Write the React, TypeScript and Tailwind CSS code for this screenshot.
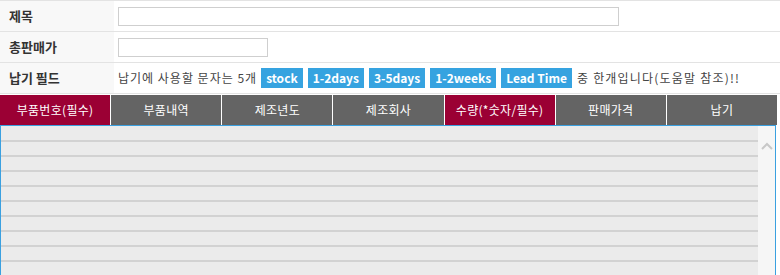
const font = { fontFamily: '"Noto Sans CJK KR", "Noto Sans", sans-serif' };

const codes = ["stock", "1-2days", "3-5days", "1-2weeks", "Lead Time"];

const columns = [
  { label: "부품번호(필수)", req: true },
  { label: "부품내역", req: false },
  { label: "제조년도", req: false },
  { label: "제조회사", req: false },
  { label: "수량(*숫자/필수)", req: true },
  { label: "판매가격", req: false },
  { label: "납기", req: false },
];

function Row({ label, children }: { label: string; children: React.ReactNode }) {
  return (
    <div className="flex h-[31px] border-b border-[#e3e3e3]">
      <div className="w-[114px] shrink-0 bg-[#f8f8f8] pl-[9px] flex items-center text-[13px] font-bold text-[#333]">
        {label}
      </div>
      <div className="flex-1 flex items-center pl-[4px]">{children}</div>
    </div>
  );
}

export default function App() {
  return (
    <div className="w-[780px] h-[275px] overflow-hidden bg-white" style={font}>
      <div className="border-t border-[#e3e3e3]">
        <Row label="제목">
          <div className="w-[501px] h-[19px] border border-[#cfcfcf] bg-white" />
        </Row>
        <Row label="총판매가">
          <div className="w-[150px] h-[19px] border border-[#cfcfcf] bg-white" />
        </Row>
        <Row label="납기 필드">
          <div className="flex items-center text-[12px] text-[#444]">
            <span className="mr-[4px] tracking-[1px]">납기에 사용할 문자는 5개</span>
            {codes.map((c) => (
              <span
                key={c}
                className="mr-[5px] h-[20px] px-[5px] flex items-center bg-[#36a3e0] text-white text-[12px] font-bold"
              >
                {c}
              </span>
            ))}
            <span className="tracking-[1.2px]">중 한개입니다(도움말 참조)!!</span>
          </div>
        </Row>
      </div>

      <div className="mt-[1px] w-[777px] grid grid-cols-7 gap-px bg-white">
        {columns.map((c) => (
          <div
            key={c.label}
            className={`h-[30px] flex items-center justify-center text-[12px] tracking-[0.3px] text-white ${
              c.req ? "bg-[#9b0034]" : "bg-[#646464]"
            }`}
          >
            {c.label}
          </div>
        ))}
      </div>

      <div className="w-[776px] h-[160px] border border-[#3aa0e0] flex bg-[#ebebeb]">
        <div className="flex-1 pt-[14px]">
          {Array.from({ length: 10 }).map((_, i) => (
            <div key={i} className="h-[15px] border-t-2 border-[#d2d2d2]" />
          ))}
        </div>
        <div className="w-[17px] bg-[#f6f6f6] flex justify-center pt-[16px]">
          <svg width="12" height="8" viewBox="0 0 12 8">
            <path d="M1 7 L6 2 L11 7" fill="none" stroke="#c8c8c8" strokeWidth="2" />
          </svg>
        </div>
      </div>
    </div>
  );
}
